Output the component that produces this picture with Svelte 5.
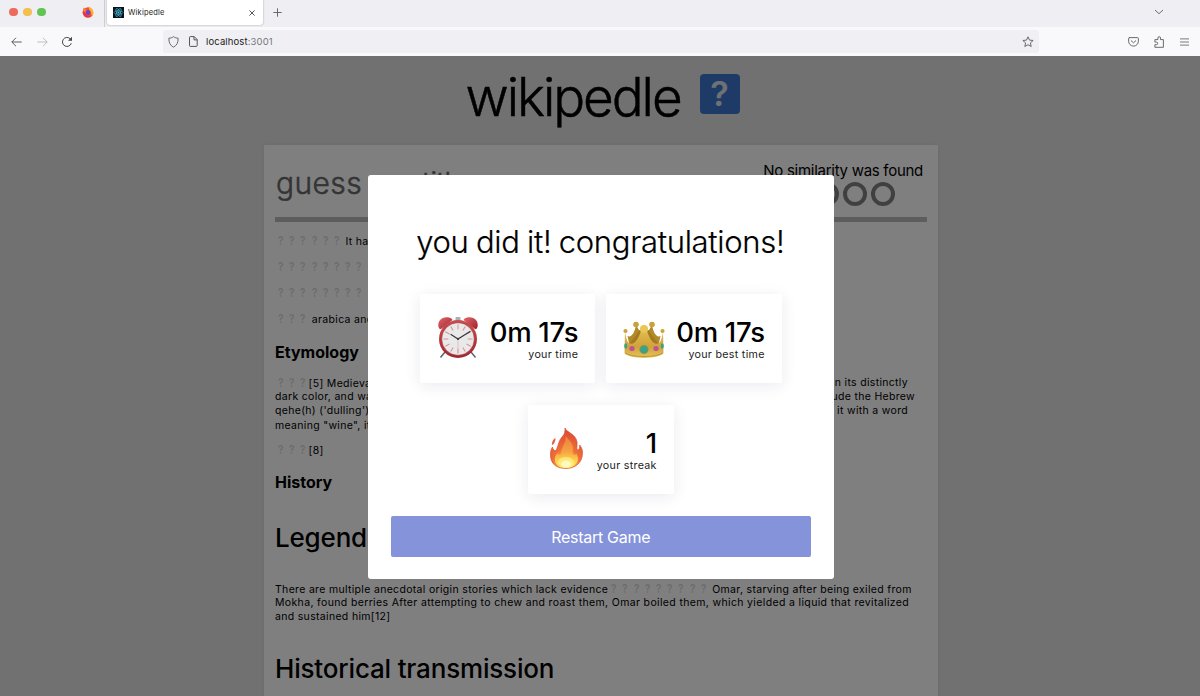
<script>
  const intro = [
    { blanks: 6, text: ' It has' },
    { blanks: 8, text: '' },
    { blanks: 8, text: '' },
    { blanks: 3, text: ' arabica and' }
  ];
</script>

{#snippet blanks(n)}{#each Array(n) as _}<span class="blank">?</span>{/each}{/snippet}

<div class="window">
  <header class="tabs">
    <div class="lights"><i class="red"></i><i class="amber"></i><i class="green"></i></div>
    <svg class="fox" width="12" height="12" viewBox="0 0 24 24">
      <circle cx="12" cy="13" r="10.5" fill="#f0532d" />
      <path d="M15 0c1 5 8 6 8 14a11 11 0 0 1-7 9c5-5 3-9 1-12-3-3-4-6-2-11z" fill="#ffb52b" />
      <path d="M2 6l2-3 3 4 5 1-2 4-5 2z" fill="#ff7930" />
      <circle cx="12" cy="13" r="4.8" fill="#7542c7" />
      <path d="M1 11c1 13 15 15 20 6-4 4-12 4-15-4z" fill="#e33355" />
    </svg>
    <div class="split"></div>
    <div class="tab">
      <svg width="11" height="11" viewBox="0 0 22 22">
        <rect width="22" height="22" fill="#07141b" />
        <g fill="none" stroke="#4bbad8" stroke-width="1.3">
          <ellipse cx="11" cy="11" rx="9" ry="3.5" />
          <ellipse cx="11" cy="11" rx="9" ry="3.5" transform="rotate(60 11 11)" />
          <ellipse cx="11" cy="11" rx="9" ry="3.5" transform="rotate(120 11 11)" />
        </g>
        <circle cx="11" cy="11" r="2" fill="#4bbad8" />
      </svg>
      <span>Wikipedle</span>
      <svg width="6" height="6" viewBox="0 0 6 6"><path d="M.4.4l5.200 5.200m0-5.200l-5.200 5.200" stroke="#444" stroke-width=".9" /></svg>
    </div>
    <svg class="plus" width="9" height="9" viewBox="0 0 9 9"><path d="M4.5.3v8.4M.3 4.5h8.4" stroke="#5b5b60" stroke-width=".9" /></svg>
    <svg class="chev" width="10" height="6" viewBox="0 0 10 6"><path d="M1 1l4 3.7L9 1" fill="none" stroke="#5b5b60" stroke-width=".9" /></svg>
  </header>

  <nav class="toolbar">
    <svg class="back" width="11" height="10" viewBox="0 0 11 10"><path d="M10.7 5H.8M5 .8L.8 5 5 9.2" fill="none" stroke="#4c4c52" stroke-width=".9" /></svg>
    <svg class="fwd" width="11" height="10" viewBox="0 0 11 10"><path d="M.3 5h9.9M6 .8L10.2 5 6 9.2" fill="none" stroke="#b6b6bb" stroke-width=".9" /></svg>
    <svg class="reload" width="12" height="12" viewBox="0 0 12 12"><path d="M10.3 7.2A4.5 4.5 0 1 1 9.2 2.8L10.5 4" fill="none" stroke="#45454a" /><path d="M11 .8v4H7z" fill="#45454a" /></svg>
    <div class="address">
      <svg width="11" height="12" viewBox="0 0 11 12"><path d="M5.5.7c1.4 1 3 1.4 4.6 1.5.2 4.3-1.2 7.2-4.6 9C2.100 9.400.700 6.500.900 2.200 2.500 2.100 4.100 1.700 5.500.700z" fill="none" stroke="#5b5b60" stroke-width=".9" stroke-linejoin="round" /></svg>
      <svg class="doc" width="9" height="11" viewBox="0 0 9 11"><path d="M1.2.6h4l3 3v6q0 .8-.8.8H1.200q-.7 0-.7-.8v-8.200q0-.8.7-.8zM5 .7v3.200h3.200" fill="none" stroke="#4c4c52" stroke-width=".95" /></svg>
      <span class="url">localhost<em>:3001</em></span>
      <svg class="star" width="12" height="12" viewBox="0 0 12 12"><path d="M6 .8l1.500 3.300 3.600.4-2.700 2.400.8 3.600L6 8.700l-3.200 1.800.8-3.600L.9 4.500l3.600-.4z" fill="none" stroke="#5b5b60" stroke-width=".9" stroke-linejoin="round" /></svg>
    </div>
    <svg class="pocket" width="11" height="10" viewBox="0 0 11 10"><path d="M1.500.6h8q.9 0 .9.9v2.700a4.900 4.900 0 0 1-9.800 0V1.500q0-.9.900-.9zM3.200 3.700l2.300 2.100 2.300-2.100" fill="none" stroke="#5b5b60" stroke-width=".9" stroke-linecap="round" /></svg>
    <svg class="puzzle" width="11" height="12" viewBox="0 0 11 12"><path d="M.9 5.300V3.600h3V2a1.300 1.300 0 0 1 2.600 0v1.600h2.900v7.700H.9V8.700h1.500a1.300 1.300 0 0 0 0-2.600H.9z" fill="none" stroke="#5b5b60" stroke-width=".9" stroke-linejoin="round" /></svg>
    <svg class="menu" width="9" height="8" viewBox="0 0 9 8"><path d="M0 .9h9M0 4h9M0 7.100h9" stroke="#5b5b60" stroke-width=".8" /></svg>
  </nav>

  <main class="page">
    <div class="brand">
      <h1>wikipedle</h1>
      <div class="help"><span>?</span></div>
    </div>

    <article>
      <div class="guess">
        <span class="placeholder">guess <span>any title</span></span>
        <div class="result">
          <p>No similarity was found</p>
          <div class="rings"><i></i><i></i><i></i><i></i><i></i></div>
        </div>
      </div>
      {#each intro as row}
        <p class="row">{@render blanks(row.blanks)}<span class="lead">{row.text}</span></p>
      {/each}
      <h3>Etymology</h3>
      <div class="para split-lines">
        <div><span>{@render blanks(3)}[5] Medieval</span><span class="r1">in its distinctly</span></div>
        <div><span>dark color, and was</span><span class="r2">include the Hebrew</span></div>
        <div><span>qehe(h) ('dulling')</span><span class="r3">it with a word</span></div>
        <div><span>meaning "wine", it</span></div>
      </div>
      <p class="row cite">{@render blanks(3)}[8]</p>
      <h3 class="history">History</h3>
      <h2>Legend</h2>
      <div class="para legend">
        <div>There are multiple anecdotal origin stories which lack evidence{@render blanks(9)} Omar, starving after being exiled from</div>
        <div class="wide">Mokha, found berries After attempting to chew and roast them, Omar boiled them, which yielded a liquid that revitalized</div>
        <div>and sustained him[12]</div>
      </div>
      <h2 class="transmission">Historical transmission</h2>
    </article>

    <div class="overlay">
      <section class="modal">
        <h2>you did it! congratulations!</h2>
        <div class="stats">
          <div class="stat">
            <svg width="42" height="43" viewBox="0 0 42 43">
              <defs>
                <linearGradient id="bell" x1="0" y1="0" x2="1" y2="1"><stop offset="0" stop-color="#e0696c" /><stop offset="1" stop-color="#a01f2a" /></linearGradient>
                <linearGradient id="rim" x1="0" y1="0" x2="0" y2="1"><stop offset="0" stop-color="#cc4c4e" /><stop offset="1" stop-color="#a12730" /></linearGradient>
              </defs>
              <path d="M8 36l-4.500 5.500M34 36l4.500 5.500" stroke="#62656b" stroke-width="1.500" />
              <rect x="18.500" y="1" width="5" height="5" rx="1" fill="#a9adb4" />
              <path d="M1.500 11C0 4 6 0 12 1.500c2 .5 3 1.500 3.500 2.500L4 13c-1 .5-2-.5-2.500-2z" fill="url(#bell)" />
              <path d="M40.500 11C42 4 36 0 30 1.500c-2 .5-3 1.500-3.500 2.500L38 13c1 .5 2-.5 2.500-2z" fill="url(#bell)" />
              <circle cx="21" cy="23" r="19" fill="url(#rim)" />
              <circle cx="21" cy="23" r="16.300" fill="#e9e9e9" stroke="#8d2028" stroke-width=".5" />
              <g stroke="#dc8788" stroke-width=".9">
                {#each Array(12) as _, i}<path d="M21 8.500v4.800" transform="rotate({i * 30} 21 23)" />{/each}
              </g>
              <path d="M21 21v16" stroke="#e7a3a4" stroke-width=".6" />
              <path d="M14 18.500l7 4.500 12-7.500" fill="none" stroke="#35373b" stroke-width="1.200" stroke-linecap="round" />
              <circle cx="21" cy="23" r="1" fill="#333" />
            </svg>
            <div class="value"><b>0m 17s</b><small>your time</small></div>
          </div>
          <div class="stat">
            <svg width="42" height="43" viewBox="0 0 42 43">
              <defs><linearGradient id="gold" x1="0" y1="0" x2="0" y2="1"><stop offset="0" stop-color="#e2ba4e" /><stop offset=".6" stop-color="#cfa23c" /><stop offset="1" stop-color="#e6c65c" /></linearGradient></defs>
              <path d="M4.500 20c4 2 7-3 8.500-11l3 5 5 1 5-1 3-5c1.500 8 4.500 13 8.500 11l-3 14h-27z" fill="#b38a2b" />
              <path d="M17 14l2 4-6 10-6-1zM25 14l-2 4 6 10 6-1z" fill="#a37a20" />
              <path d="M2 15c1 9 3 13 6.500 13C13 27 15.500 22 18 15h6c2.500 7 5 12 9.500 13 3.500 0 5.500-4 6.500-13l.5 22c-5 6.500-34 6.500-39 0z" fill="url(#gold)" />
              <circle cx="13" cy="8.500" r="2.800" fill="#cca03a" /><circle cx="29" cy="8.500" r="2.800" fill="#cca03a" />
              <circle cx="21" cy="13" r="4" fill="#e8c656" />
              <circle cx="2.500" cy="15" r="2.100" fill="#cea23b" /><circle cx="39.500" cy="15" r="2.100" fill="#cea23b" />
              <path d="M2 37q6 3.500 19 3.500t19-3.500" fill="none" stroke="#b18426" stroke-width=".7" />
              <circle cx="21" cy="33.500" r="4.300" fill="#39a288" stroke="#b88b2c" stroke-width=".6" />
              <circle cx="9" cy="32.500" r="2.600" fill="#c24f98" /><circle cx="33" cy="32.500" r="2.600" fill="#c24f98" />
              <ellipse cx="2.700" cy="30" rx="1.500" ry="2.800" fill="#39a288" /><ellipse cx="39.300" cy="30" rx="1.500" ry="2.800" fill="#39a288" />
            </svg>
            <div class="value"><b>0m 17s</b><small>your best time</small></div>
          </div>
          <div class="stat streak">
            <svg width="42" height="43" viewBox="0 0 42 43">
              <defs>
                <radialGradient id="flame" cx=".5" cy=".92" r=".85"><stop offset="0" stop-color="#fff35a" /><stop offset=".25" stop-color="#ffc342" /><stop offset=".5" stop-color="#ee7138" /><stop offset="1" stop-color="#dc4a32" /></radialGradient>
                <linearGradient id="core" x1="0" y1="0" x2="0" y2="1"><stop offset="0" stop-color="#ee8440" /><stop offset=".5" stop-color="#f7a544" /><stop offset=".8" stop-color="#fdd94f" /><stop offset="1" stop-color="#fff27a" /></linearGradient>
              </defs>
              <path d="M20 1c1 4 11 6 12 14 .3 3-.4 6 0 8 2 0 3-2 2.700-5 3 4 3.300 7 2.300 12-1.500 7-8 11.500-16 11.500S6 38 5.500 29c-.2-4 .5-7 2-9 .5 3 2 4 3.500 3.500C14 17 13.500 14 17 10c3-3 3-6 3-9z" fill="url(#flame)" stroke="#da5238" stroke-width=".7" />
              <path d="M10.500 11c-2 1-4 4-3.500 7 2.500-1 3.500-4 3.500-7z" fill="#e25d42" />
              <path d="M20.500 9c1 7-4 10-4.500 18-1 2-3 0-3-1-3 2-3.500 5-3 8 1 4.500 6 6.500 11 6.500 7 0 12-4 12-9 0-2-1-3-1.500-5-1 2-3.500 2-4-1 2-9-3-11.500-7-16.500z" fill="url(#core)" opacity=".9" />
              <ellipse cx="21" cy="35.500" rx="8" ry="5.500" fill="#fff58c" opacity=".65" />
              <ellipse cx="21" cy="37" rx="5" ry="3.500" fill="#fffbd0" opacity=".8" />
            </svg>
            <div class="value"><b>1</b><small>your streak</small></div>
          </div>
        </div>
        <button>Restart Game</button>
      </section>
    </div>
  </main>
</div>

<style>
  :global(body) { margin: 0; }
  .window { width: 1200px; height: 696px; overflow: hidden; display: flex; flex-direction: column; font-family: Inter, sans-serif; color: #000; background: #f9f9fb; }
  * { box-sizing: border-box; }
  h1, h2, h3, p { margin: 0; font-weight: 400; }
  svg { flex: none; display: block; }
  .tabs { height: 27px; flex: none; background: #efeef3; display: flex; align-items: center; padding: 0 36px 3px 9px; }
  .lights { display: flex; gap: 5.500px; }
  .lights i { width: 8.500px; height: 8.500px; border-radius: 50%; }
  .red { background: #ec6a5e; } .amber { background: #f3bf4f; } .green { background: #61c554; }
  .fox { margin-left: 36px; }
  .split { width: 1px; height: 27px; margin: 3px 2px 0 10px; background: #cdccd3; }
  .tab { width: 156px; height: 25px; margin-top: 1px; background: #fff; border-radius: 0 0 3px 3px; box-shadow: 0 0 2px #9999a0; display: flex; align-items: center; padding: 0 8px 0 6px; }
  .tab span { font-size: 7.500px; margin-left: 4.500px; flex: 1; letter-spacing: .2px; color: #222; }
  .plus { margin-left: 10px; margin-top: 1px; }
  .chev { margin-left: auto; }
  .toolbar { height: 29px; flex: none; display: flex; align-items: center; padding: 0 11px 0 11px; }
  .fwd { margin-left: 15px; }
  .reload { margin-left: 13px; }
  .address { width: 877px; height: 23px; margin-left: 90px; border-radius: 3px; background: #f0f0f4; display: flex; align-items: center; padding: 0 5px 0 5px; }
  .doc { margin-left: 10px; }
  .url { flex: 1; margin-left: 8px; font-size: 9.500px; letter-spacing: .12px; color: #222; }
  .url em { font-style: normal; color: #77777c; }
  .pocket { margin-left: 89px; }
  .puzzle { margin-left: 15px; }
  .menu { margin-left: 15px; }

  .page { position: relative; height: 640px; flex: none; overflow: hidden; background: #e3e3e4; display: flex; flex-direction: column; align-items: center; }
  .brand { height: 89px; flex: none; width: 274px; display: flex; justify-content: space-between; position: relative; left: 2.500px; }
  h1 { font-size: 53px; line-height: 64px; margin-top: 9px; font-weight: 300; letter-spacing: -2.050px; white-space: nowrap; -webkit-text-stroke: .5px #000; }
  .help { width: 40px; height: 40px; margin-top: 18px; border-radius: 4px; background: #3d74cc; color: #fff; display: flex; align-items: center; justify-content: center; }
  .help span { font-size: 34px; font-weight: 600; line-height: 40px; color: #dfe3ea; }
  article { width: 674px; height: 610px; flex: none; margin-left: 2px; background: #fff; padding: 0 11px; box-shadow: 0 0 4px #d2d2d8; font-size: 10.500px; letter-spacing: .32px; white-space: nowrap; }
  .guess { height: 77px; border-bottom: 5px solid #bababb; display: flex; justify-content: space-between; }
  .placeholder { font-size: 30px; line-height: 36px; margin: 20px 0 0 1px; font-weight: 300; color: #686868; letter-spacing: .4px; -webkit-text-stroke: .5px #686868; }
  .placeholder span { letter-spacing: -.9px; word-spacing: -4px; }
  .result { padding: 15px 4px 0 0; }
  .result p { font-size: 15px; line-height: 22px; letter-spacing: -.28px; text-align: right; }
  .rings { display: flex; gap: 4px; margin: 0 28px 0 0; justify-content: flex-end; }
  .rings i { width: 24px; height: 24px; border: 4px solid #808080; border-radius: 50%; }
  .row { height: 14px; line-height: 14px; margin-top: 12px; white-space: pre; }
  .blank { display: inline-block; width: 11.200px; text-align: center; color: #d8d8d8; font-weight: 600; font-size: 11px; line-height: 14px; letter-spacing: 0; transform: scale(.9, 1.1); }
  h3 { font-size: 16px; line-height: 20px; font-weight: 700; margin-top: 16px; letter-spacing: 0; }
  .para { line-height: 14px; margin-top: 14px; }
  .split-lines > div { display: flex; justify-content: space-between; height: 14.200px; }
  .r1 { margin-right: 19px; } .r2 { margin-right: 12px; } .r3 { margin-right: 19px; }
  .cite { margin-top: 10px; }
  .history { margin-top: 15px; }
  article h2 { font-size: 26px; line-height: 36px; margin-top: 28px; font-weight: 500; letter-spacing: -.18px; }
  .legend { margin-top: 26px; }
  .legend > div { height: 14px; }
  .wide { letter-spacing: .355px; }
  article .transmission { margin-top: 27px; }

  .overlay { position: absolute; inset: 0; background: rgba(0, 0, 0, .5); }
  .modal { position: absolute; left: 368px; top: 119px; width: 465.500px; height: 404px; background: #fff; border-radius: 3px; padding: 48px 22.500px 22px; display: flex; flex-direction: column; align-items: center; }
  .modal h2 { font-size: 31px; line-height: 38px; font-weight: 300; white-space: nowrap; letter-spacing: -.3px; word-spacing: -1px; -webkit-text-stroke: .2px #000; margin-left: -1px; }
  .stats { display: flex; flex-wrap: wrap; justify-content: center; gap: 22px 11px; margin-top: 33px; width: 420px; }
  .stat { width: 175.500px; height: 89px; border-radius: 2px; background: #fff; box-shadow: 0 3px 16px rgba(20, 30, 80, .09); display: flex; justify-content: space-between; align-items: center; padding: 0 17px 3px; }
  .streak { width: 146px; }
  .value { display: flex; flex-direction: column; align-items: flex-end; white-space: nowrap; padding-top: 7px; }
  .value b { font-size: 27.500px; line-height: 29px; font-weight: 500; letter-spacing: -.3px; }
  .value small { font-size: 10.700px; line-height: 16px; letter-spacing: .3px; color: #222; }
  button { width: 420px; height: 41px; flex: none; margin-top: 22px; border: 0; border-radius: 2px; background: #8493da; color: #fff; font: 400 16px/40px Inter, sans-serif; letter-spacing: -.28px; padding: 0; }
</style>
